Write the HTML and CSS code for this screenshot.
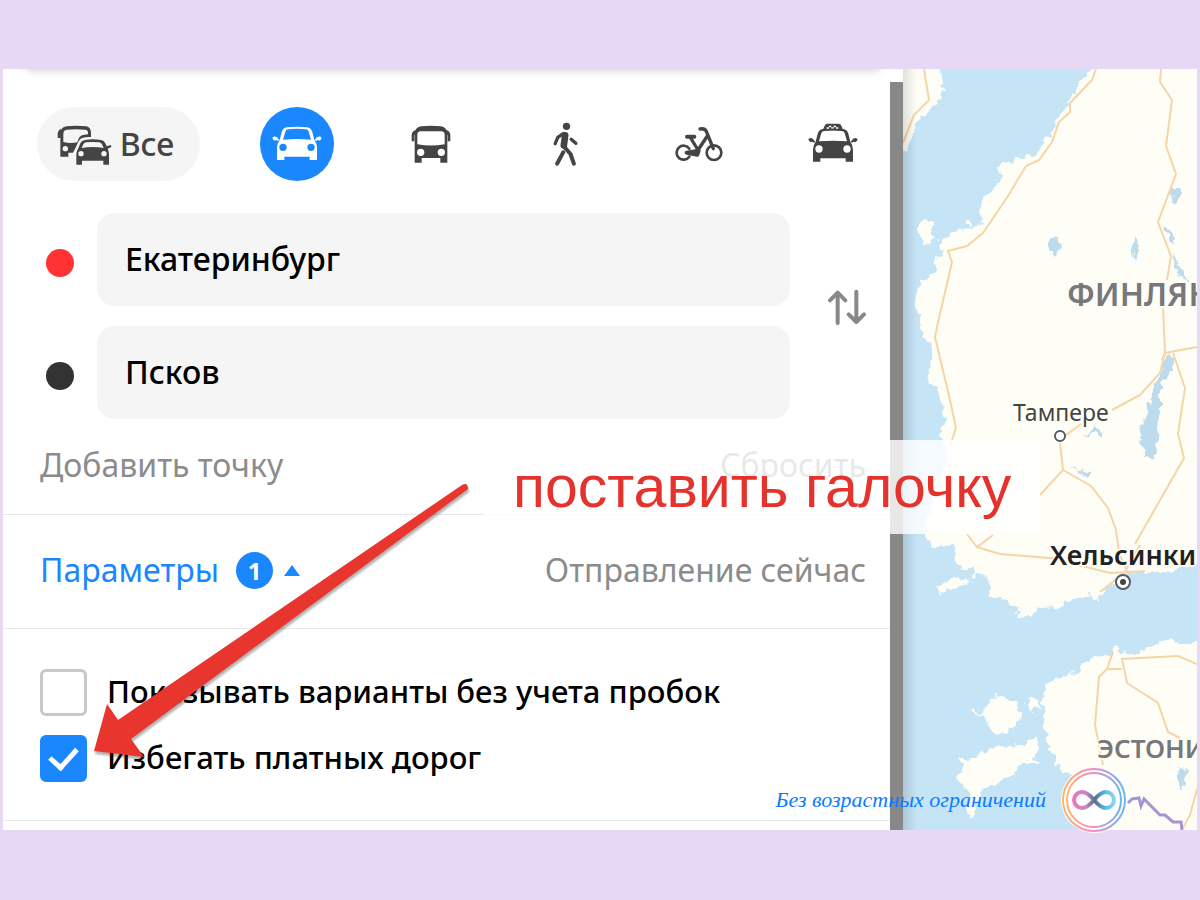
FILE: index.html
```html
<!DOCTYPE html>
<html lang="ru">
<head>
  <meta charset="UTF-8">
  <meta name="viewport" content="width=device-width, initial-scale=1.0">
  <title>Маршрут без платных дорог</title>
  <link rel="stylesheet" href="styles.css">
</head>
<body>
  <svg class="sprite" aria-hidden="true">
    <symbol id="car" viewBox="0 0 150 120">
      <path fill-rule="evenodd" d="M15 108V72q0-14 8-24l6-24q4-14 18-14q28-3 56 0q14 0 18 14l6 24q8 10 8 24V108h-22v-10h-76v10zM33 47l7-24q2-7 9-7q26-3 52 0q7 0 9 7l7 24q-42-4-84 0zM22 70a11 11 0 1 0 22 0a11 11 0 1 0-22 0zM106 70a11 11 0 1 0 22 0a11 11 0 1 0-22 0z"/>
      <path d="M1 41q7-7 14-1l7 8l-4 3l-5-3q-9 5-12-7zM149 41q-7-7-14-1l-7 8l4 3l5-3q9 5 12-7z"/>
    </symbol>
    <symbol id="bus" viewBox="0 0 120 120">
      <path fill-rule="evenodd" d="M11 116V30q0-20 20-23q29-4 58 0q20 3 20 23V116h-21v-14H32v14zM19 61V32q0-9 10-10h62q10 1 10 10V61q-41 7-82 0zM18 85a11 11 0 1 0 22 0a11 11 0 1 0-22 0zM80 85a11 11 0 1 0 22 0a11 11 0 1 0-22 0z"/>
      <path d="M14 18Q2 22 2 34V52h8V34l8-8zM106 18q12 4 12 16V52h-8V34l-8-8z"/>
    </symbol>
  </svg>

  <main class="shot">
    <section class="panel">
      <form class="route">
        <div class="modes">
          <button type="button" class="mode mode-all">
            <svg width="56" height="44" viewBox="0 0 168 132">
              <path d="M10 104V40Q8 16 28 13q30-4 60 0q14 2 14 22v10h-7q-20 0-27 8q-6 8-10 20l-10 19h-14v12zM19 60q20 5 42 1q4-19 17-22l15-2v-5q0-8-8-9q-28-3-56 0q-10 1-10 12zM17 80a8 8 0 1 0 16 0a8 8 0 1 0-16 0z" fill-rule="evenodd"/>
              <path d="M12 20Q2 26 2 36v12h9z"/>
              <path fill-rule="evenodd" d="M58 128V96q0-8 5-15l7-17q4-9 14-10q24-4 48 0q9 1 13 10l4 9l13-4l1 6l-11 5q4 8 4 16v32h-17v-12H75v12zM74 78q35-6 66 0l-5-11q-2-5-8-6q-20-2-40 0q-6 1-8 6zM64 95a8 8 0 1 0 16 0a8 8 0 1 0-16 0zM133 95a8 8 0 1 0 16 0a8 8 0 1 0-16 0z"/>
            </svg>
            Все
          </button>
          <button type="button" class="mode active" aria-label="На машине">
            <svg width="50" height="40"><use href="#car"/></svg>
          </button>
          <button type="button" class="mode" aria-label="На автобусе">
            <svg width="40" height="40"><use href="#bus"/></svg>
          </button>
          <button type="button" class="mode" aria-label="Пешком">
            <svg width="27" height="44" viewBox="273 183 80 132">
              <circle cx="316" cy="196" r="11"/>
              <g class="line">
                <path stroke-width="20" d="M312 223L308 253"/>
                <path stroke-width="10" d="M306 218L290 229L282 248M330 235L344 247"/>
                <path stroke-width="12" d="M308 256L328 279L338 308M306 274L288 308"/>
              </g>
            </svg>
          </button>
          <button type="button" class="mode" aria-label="На велосипеде">
            <svg width="50" height="40" viewBox="638 188 150 120">
              <g class="line">
                <path stroke-width="8" d="M684 262A21 21 0 1 0 684 286"/>
                <circle stroke-width="8" cx="758" cy="274" r="22"/>
                <path stroke-width="12" d="M677 226h22"/>
                <path stroke-width="10" d="M688 230L710 266L738 224M716 203q14-3 19 7L756 262"/>
                <path stroke-width="12" d="M676 274L712 268L708 280Z"/>
              </g>
            </svg>
          </button>
          <button type="button" class="mode" aria-label="На такси">
            <svg width="50" height="42" viewBox="0 0 150 126">
              <use href="#car" y="8" width="150" height="120"/>
              <path fill-rule="evenodd" d="M44 22l6-14q2-6 8-6h34q6 0 8 6l6 14zM56 18h7v-5h7v5h7v-5h7v5h7v-5h-7v-5h-7v5h-7v-5h-7v5h-7z"/>
            </svg>
          </button>
        </div>

        <div class="points">
          <div class="fields">
            <div class="field">
              <span class="dot from"></span>
              <input type="text" aria-label="Откуда" value="Екатеринбург">
            </div>
            <div class="field">
              <span class="dot to"></span>
              <input type="text" aria-label="Куда" value="Псков">
            </div>
          </div>
          <button type="button" class="swap" aria-label="Поменять местами">
            <svg width="40" height="36" viewBox="379 266 120 108">
              <path class="line" stroke-width="12" d="M411 368V277M388 300L411 277L434 300M467 274V365M444 342L467 365L490 342"/>
            </svg>
          </button>
        </div>

        <div class="row">
          <a href="#">Добавить точку</a>
          <a href="#">Сбросить</a>
        </div>

        <div class="row row-params">
          <button type="button" class="params">
            Параметры
            <span class="count">1</span>
            <span class="caret"></span>
          </button>
          <a href="#">Отправление сейчас</a>
        </div>

        <div class="options">
          <label class="option"><input type="checkbox"><span>Показывать варианты без учета пробок</span></label>
          <label class="option"><input type="checkbox" checked><span>Избегать платных дорог</span></label>
        </div>
      </form>
      <div class="scrollbar"></div>
    </section>

    <section class="map">
      <svg viewBox="903 69 294 761" preserveAspectRatio="xMinYMin slice">
        <defs>
          <filter id="coast" x="0" y="0" width="1" height="1">
            <feTurbulence type="fractalNoise" baseFrequency="0.13" numOctaves="2" seed="4"/>
            <feDisplacementMap in="SourceGraphic" scale="11" xChannelSelector="R" yChannelSelector="G"/>
          </filter>
        </defs>
        <g filter="url(#coast)">
          <rect class="sea" x="880" y="40" width="350" height="820"/>
          <g class="land">
            <path d="M890 50H935L941 77L945 88L937 103L917 123L907 150L890 160Z"/>
            <path d="M1098 50L1090 69L1077 90L1063 110L1055 123L1052 135L1042 138L1040 152L1027 157L1015 160L997 167L1003 178L993 190L983 197L980 210L983 223L970 227L950 233L940 243L942 257L933 260L937 270L920 283L915 303L917 313L923 337L933 343L928 383L937 387L943 407L945 423L940 433L948 460L938 480L930 510L925 533L933 547L955 545L957 560L962 570L973 567L972 575L990 577L987 597L1007 600L1020 608L1015 618L1032 617L1037 608L1063 607L1072 598L1090 595L1097 602L1107 588L1133 572L1157 570L1173 573L1183 565L1230 567V50Z"/>
            <path d="M1230 652L1185 642L1157 640L1153 647L1137 655L1120 653L1116 643L1112 655L1090 658L1077 672L1050 682L1045 683L1043 723L1047 743L1053 753L1060 770L1070 775L1088 795L1098 860H1230Z"/>
            <path d="M968 713L985 711L987 702L998 695L1018 703L1022 718L1007 732L995 737L988 723L985 716Z"/>
            <path d="M958 757L970 760L997 745L1007 748L1023 745L1037 737L1038 748L1033 753L1037 762L1022 762L1017 772L1000 782L980 790L977 803L970 817L967 808L970 793L958 777L963 770Z"/>
            <path d="M937 586L957 577L972 582L955 590L940 593Z"/>
            <path d="M919 223L928 218L934 225L930 232L937 240L925 246L919 235Z"/>
            <ellipse cx="1033" cy="704" rx="8" ry="5"/>
            <ellipse cx="967" cy="222" rx="4" ry="3"/>
          </g>
          <g class="lake">
            <path d="M1055 235L1062 246L1056 257L1048 248Z"/>
            <path d="M1134 237L1139 245L1136 260L1130 252Z"/>
            <path d="M1172 190L1183 188L1178 203L1170 202Z"/>
            <path d="M1161 223L1170 230L1178 243L1172 241Z"/>
            <path d="M1173 252L1180 267L1190 281L1178 278Z"/>
            <path d="M1170 352L1173 365L1167 378L1160 385L1160 405L1158 430L1155 460L1145 455L1139 432L1148 412L1153 385L1163 370Z"/>
            <path d="M1085 436L1096 425L1104 436L1094 433Z"/>
            <path d="M1072 468L1092 471L1088 479Z"/>
            <path d="M1178 766L1187 770L1184 790L1177 780Z"/>
          </g>
        </g>
        <g class="road">
          <path d="M924 69L929 100L914 115L903 143"/>
          <path d="M1096 69L1092 80L1070 103L1070 112L1059 122L1052 142L1039 160L1026 166L1008 196L983 233L967 246L948 251L952 262L939 318L935 337L950 400L956 428L950 446"/>
          <path d="M1161 69L1160 82L1172 100L1166 146L1176 174L1158 222L1171 256L1167 280M1163 308L1165 353L1160 373L1140 395L1112 410M1197 347L1165 353L1162 360M1173 353L1185 388L1178 434L1184 458L1135 544"/>
          <path d="M1081 424L1062 438M1060 443L1063 470L1040 495M1063 470L1091 486L1108 508L1116 530L1119 552L1127 572"/>
          <path d="M967 534L977 547L993 535M977 547L1000 554L1050 558L1110 573L1128 572L1145 571M1140 545L1125 572L1100 592"/>
          <path d="M1113 652L1107 669L1099 677L1095 725L1103 765M1107 669H1122M1197 664L1178 656L1122 659L1127 683L1158 703L1168 732L1180 738M1197 789L1190 815L1182 830"/>
        </g>
        <path class="border" d="M1128 803L1132 799L1139 798L1141 806L1144 799L1160 815L1165 815L1173 822L1181 822L1182 830"/>
        <circle class="town" cx="1060" cy="436" r="5"/>
        <circle class="town" cx="1123" cy="582" r="7"/>
        <circle class="town-dot" cx="1123" cy="582" r="3"/>
        <g class="labels">
          <text class="country" x="1067" y="306">ФИНЛЯНДИЯ</text>
          <text class="country small" x="1097" y="758">ЭСТОНИЯ</text>
          <text class="city" x="1013" y="421">Тампере</text>
          <text class="capital" x="1050" y="565">Хельсинки</text>
        </g>
      </svg>
    </section>

    <div class="callout">поставить галочку</div>

    <svg class="pointer" width="400" height="290" viewBox="80 475 400 290">
      <path d="M462 485Q468 482 468 489L131 739L144 757L94 751L107 704L118 720Z"/>
    </svg>

    <div class="signature">
      <span>Без возрастных ограничений</span>
      <svg width="68" height="68" viewBox="0 0 68 68">
        <defs>
          <linearGradient id="ring" x1="0" y1="0" x2="1" y2="0">
            <stop offset="0" stop-color="#fdb56a"/>
            <stop offset="0.45" stop-color="#f58cc0"/>
            <stop offset="1" stop-color="#62b8f5"/>
          </linearGradient>
          <linearGradient id="loop" gradientUnits="userSpaceOnUse" x1="14" y1="0" x2="54" y2="0">
            <stop offset="0" stop-color="#ee74bd"/>
            <stop offset="0.3" stop-color="#c58ac8"/>
            <stop offset="0.52" stop-color="#56708c"/>
            <stop offset="0.8" stop-color="#55bfea"/>
            <stop offset="1" stop-color="#8fd2f0"/>
          </linearGradient>
        </defs>
        <circle cx="34" cy="34" r="33" fill="#fff"/>
        <g fill="none" stroke="url(#ring)">
          <circle cx="34" cy="34" r="31" stroke-width="2"/>
          <circle cx="34" cy="34" r="27" stroke-width="2"/>
        </g>
        <path d="M34 34C29 28 26 26 22 26A8 8 0 0 0 22 42C26 42 29 40 34 34C39 28 42 26 46 26A8 8 0 0 1 46 42C42 42 39 40 34 34Z" fill="none" stroke="url(#loop)" stroke-width="4"/>
      </svg>
    </div>
  </main>
</body>
</html>
```

FILE: styles.css
```css
* {
  box-sizing: border-box;
}
body {
  margin: 0;
  padding: 69px 3px;
  background-color: #e7d9f5;
  font-family: "Noto Sans", sans-serif;
  font-size: 32px;
  line-height: 40px;
  color: #000;
}
button, input {
  font: inherit;
  color: inherit;
  border: none;
}
button {
  padding: 0;
  background: none;
  cursor: pointer;
}
svg {
  display: block;
  fill: currentColor;
}
.sprite {
  position: absolute;
  width: 0;
  height: 0;
}
.line {
  fill: none;
  stroke: currentColor;
  stroke-linecap: round;
  stroke-linejoin: round;
}
.shot {
  position: relative;
  display: grid;
  grid-template-columns: 900px minmax(0, 1fr);
  background-color: #fff;
}

/* route panel */
.panel {
  position: relative;
  display: grid;
  grid-template-columns: minmax(0, 1fr) 13px;
  overflow: hidden;
}
.panel::before {
  content: "";
  position: absolute;
  left: 24px;
  right: 24px;
  top: -10px;
  height: 10px;
  box-shadow: 0 0 10px rgba(0, 0, 0, 0.25);
}
.scrollbar {
  margin-top: 13px;
  background-color: #888;
}
.route {
  padding: 38px 0 9px;
}
.modes {
  display: flex;
  gap: 60px;
  padding-left: 34px;
  margin-bottom: 32px;
  color: #444;
}
.mode {
  display: flex;
  align-items: center;
  justify-content: center;
  width: 74px;
  height: 74px;
  border-radius: 37px;
}
.mode-all {
  gap: 7px;
  width: 163px;
  padding-right: 6px;
  background-color: #f5f5f5;
  font-weight: 500;
}
.mode.active {
  background-color: #1a87ff;
  color: #fff;
}
.points {
  display: flex;
  align-items: center;
  padding: 0 23px 0 43px;
}
.fields {
  display: flex;
  flex: 1;
  flex-direction: column;
  gap: 20px;
}
.field {
  display: flex;
  align-items: center;
  gap: 23px;
}
.dot {
  width: 28px;
  height: 28px;
  margin-top: 6px;
  border-radius: 50%;
}
.from {
  background-color: #ff3333;
}
.to {
  background-color: #333;
}
.field input {
  flex: 1;
  min-width: 0;
  height: 93px;
  padding: 0 28px 2px;
  border-radius: 18px;
  background-color: #f5f5f5;
  font-weight: 500;
}
.swap {
  margin-left: 37px;
  margin-top: -18px;
  color: #888;
}
.row {
  display: flex;
  align-items: center;
  justify-content: space-between;
  height: 96px;
  padding: 0 24px 3px 37px;
  border-bottom: 1px solid #e8e8e8;
}
.row a {
  color: #8c8c8c;
  text-decoration: none;
}
.row-params {
  height: 114px;
}
.params {
  display: flex;
  align-items: center;
  color: #1a87ff;
}
.count {
  width: 37px;
  height: 37px;
  margin: 0 11px 0 17px;
  border-radius: 50%;
  background-color: #1a87ff;
  color: #fff;
  font-size: 24px;
  font-weight: bold;
  line-height: 37px;
}
.caret {
  border: 8px solid transparent;
  border-top: none;
  border-bottom: 11px solid #1a87ff;
}
.options {
  display: flex;
  flex-direction: column;
  align-items: flex-start;
  gap: 19px;
  padding: 40px 37px 38px;
  border-bottom: 1px solid #e8e8e8;
  font-size: 31px;
  font-weight: 500;
}
.option {
  display: flex;
  align-items: center;
  gap: 20px;
  height: 47px;
  cursor: pointer;
}
.option span {
  padding-bottom: 4px;
}
.option input {
  appearance: none;
  display: grid;
  place-items: center;
  width: 47px;
  height: 47px;
  margin: 0;
  border: 3px solid #c8c8c8;
  border-radius: 6px;
  background-color: #fff;
}
.option input:checked {
  border-color: #1a87ff;
  background-color: #1a87ff;
}
.option input:checked::after {
  content: "";
  width: 12px;
  height: 22px;
  margin-top: -6px;
  border: solid #fff;
  border-width: 0 5px 5px 0;
  transform: rotate(42deg);
}

/* map */
.map {
  position: relative;
  overflow: hidden;
  background-color: #c5e4f6;
}
.map svg {
  position: absolute;
  width: 100%;
  height: 100%;
}
.map::after {
  content: "";
  position: absolute;
  inset: 0 auto 0 0;
  width: 14px;
  background: linear-gradient(to right, rgba(0, 0, 0, 0.12), transparent);
}
.sea {
  fill: #c5e4f6;
}
.land {
  fill: #fffef6;
}
.lake {
  fill: #bcdcee;
}
.road {
  fill: none;
  stroke: #f5d5a5;
  stroke-width: 2;
}
.border {
  fill: none;
  stroke: #a795d2;
  stroke-width: 3;
}
.town {
  fill: #fff;
  stroke: #555b68;
  stroke-width: 2;
}
.town-dot {
  fill: #444;
}
.labels {
  paint-order: stroke;
  stroke: #fffef6;
  stroke-width: 3;
}
.country {
  fill: #77777c;
  font-size: 32px;
  font-weight: 600;
}
.country.small {
  font-size: 26px;
}
.city {
  fill: #444;
  font-size: 23px;
}
.capital {
  fill: #222;
  font-size: 27px;
  font-weight: 600;
}

/* notes over the picture */
.callout {
  position: absolute;
  left: 480px;
  top: 371px;
  padding: 0 29px 0 30px;
  background-color: rgba(255, 255, 255, 0.8);
  color: #e5322d;
  font-family: "Liberation Sans", Arial, sans-serif;
  font-size: 59px;
  line-height: 94px;
  white-space: nowrap;
}
.pointer {
  position: absolute;
  left: 77px;
  top: 406px;
  fill: #e8352e;
  filter: drop-shadow(1px 3px 1px rgba(0, 0, 0, 0.3));
}
.signature {
  position: absolute;
  right: 69px;
  bottom: -4px;
  display: flex;
  align-items: center;
  gap: 14px;
  color: #0a7cff;
  font-family: "Monotype Corsiva", "Liberation Serif", serif;
  font-size: 22px;
  font-style: italic;
}
```
